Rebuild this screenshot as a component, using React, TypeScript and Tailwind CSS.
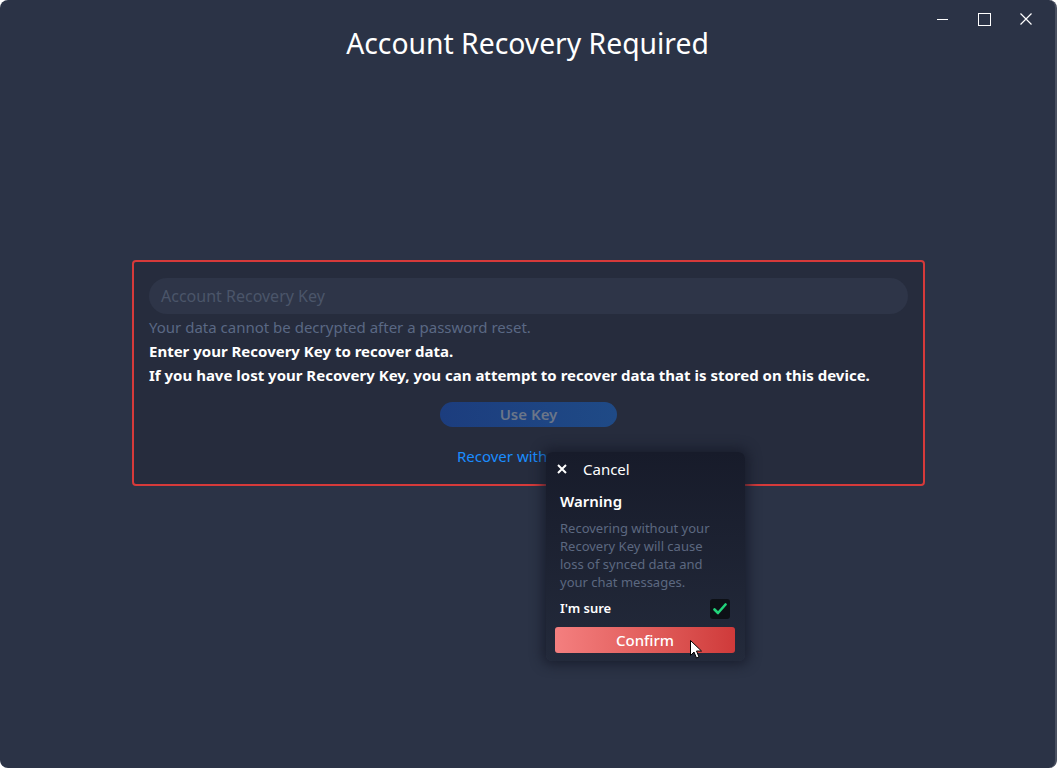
import React from "react";

export default function App() {
  return (
    <div className="w-[1057px] h-[768px] bg-white" style={{ fontFamily: '"Noto Sans", "Open Sans", sans-serif' }}>
      <div className="relative w-[1057px] h-[768px] bg-[#2b3346] rounded-[8px] overflow-hidden border-r-2 border-[#4a5060] flex flex-col items-center">
        {/* window controls */}
        <div className="absolute top-[7px] right-[17px] flex items-center gap-[18px] text-white">
          <div className="w-[24px] h-[24px] flex items-center justify-center">
            <div className="w-[11px] h-[1px] bg-white" />
          </div>
          <div className="w-[24px] h-[24px] flex items-center justify-center">
            <div className="w-[13px] h-[13px] border border-white" />
          </div>
          <div className="w-[24px] h-[24px] flex items-center justify-center">
            <svg width="12" height="12" viewBox="0 0 12 12" stroke="white" strokeWidth="1.2">
              <path d="M0.5 0.5 L11.5 11.5 M11.5 0.5 L0.5 11.5" />
            </svg>
          </div>
        </div>

        <h1 className="mt-[23px] text-[28.3px] leading-[40px] text-white font-normal">Account Recovery Required</h1>

        <div className="mt-[197px] w-[793px] ml-[2px] border-2 border-[#d63a3a] rounded-[4px] bg-[#262c3d] px-[15px] pt-[16px] pb-[16px] flex flex-col">
          <div className="h-[36px] rounded-full bg-[#2e3548] flex items-center px-[12px] text-[16px] text-[#4b556a]">
            Account Recovery Key
          </div>
          <p className="mt-[1px] text-[15px] leading-[24px] text-[#5a6884]">Your data cannot be decrypted after a password reset.</p>
          <p className="text-[15px] leading-[24px] text-white font-bold">Enter your Recovery Key to recover data.</p>
          <p className="text-[15px] leading-[24px] text-white font-bold">If you have lost your Recovery Key, you can attempt to recover data that is stored on this device.</p>
          <div className="mt-[15px] flex justify-center">
            <div className="w-[177px] h-[25px] rounded-full bg-gradient-to-r from-[#1c3d7e] to-[#1f4a86] flex items-center justify-center text-[15px] font-semibold text-[#6b7689]">
              Use Key
            </div>
          </div>
          <div className="mt-[17px] flex justify-center">
            <span className="text-[15px] leading-[24px] text-[#1a8cff]">Recover without Key</span>
          </div>
        </div>

        {/* popup */}
        <div className="absolute left-[546px] top-[452px] w-[199px] h-[209px] rounded-[6px] bg-gradient-to-b from-[#171b2a] to-[#232a3b] shadow-[0_0_12px_4px_rgba(22,26,40,0.75)] flex flex-col px-[14px]">
          <div className="h-[34px] flex items-center gap-[16px] ml-[-3px]">
            <svg width="10" height="10" viewBox="0 0 10 10" stroke="white" strokeWidth="2">
              <path d="M1 1 L9 9 M9 1 L1 9" />
            </svg>
            <span className="text-[15px] text-white">Cancel</span>
          </div>
          <div className="mt-[3px] text-[15px] font-semibold text-white leading-[24px]">Warning</div>
          <p className="mt-[6px] text-[13px] leading-[18px] text-[#5c6880] w-[158px]">
            Recovering without your Recovery Key will cause loss of synced data and your chat messages.
          </p>
          <div className="mt-[8px] flex items-center justify-between">
            <span className="text-[13px] font-semibold text-white">I'm sure</span>
            <div className="w-[20px] h-[20px] rounded-[3px] bg-[#0d1016] flex items-center justify-center mr-[1px]">
              <svg width="14" height="12" viewBox="0 0 14 12" fill="none" stroke="#22d37a" strokeWidth="2.6" strokeLinecap="round" strokeLinejoin="round">
                <path d="M1.5 6.5 L5 10 L12.5 1.5" />
              </svg>
            </div>
          </div>
          <div className="mt-[8px] ml-[-5px] w-[180px] h-[26px] rounded-[3px] bg-gradient-to-r from-[#f47f7f] to-[#cf3a3a] flex items-center justify-center text-[15px] font-medium text-white">
            Confirm
          </div>
        </div>

        {/* cursor */}
        <svg className="absolute left-[690px] top-[640px]" width="13" height="19" viewBox="0 0 13 19">
          <path d="M0.5 0.5 L0.5 15.5 L4 12 L6.5 18 L9 17 L6.5 11 L11.5 11 Z" fill="white" stroke="black" strokeWidth="1" />
        </svg>
      </div>
    </div>
  );
}
